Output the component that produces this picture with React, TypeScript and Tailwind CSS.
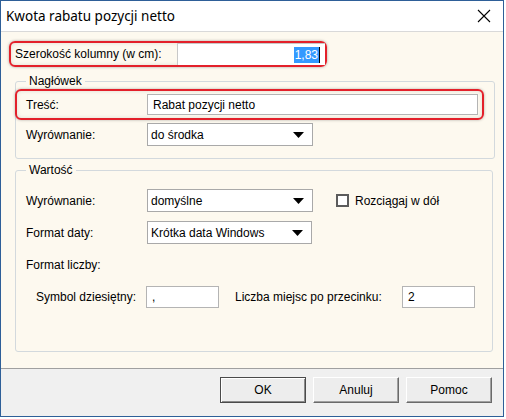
import React from "react";

function Arrow() {
  return (
    <svg width="11" height="6" viewBox="0 0 11 6" className="shrink-0">
      <path d="M0 0 H11 L5.5 6 Z" fill="#000" />
    </svg>
  );
}

function Select({ value, width }: { value: string; width: string }) {
  return (
    <div
      className={`${width} h-[23px] bg-white border border-[#a9a9a9] flex items-center justify-between pl-[3px] pr-[8px]`}
    >
      <span>{value}</span>
      <Arrow />
    </div>
  );
}

function Button({ label, primary }: { label: string; primary?: boolean }) {
  return (
    <button
      className={`w-[86px] h-[26px] bg-[#ededed] text-[12px] text-black ${
        primary
          ? "border border-[#4a4a4a] shadow-[inset_1px_1px_0_#ffffff,inset_-1px_-1px_0_#8a8a8a]"
          : "border border-t-[#ffffff] border-l-[#ffffff] border-b-[#6a6a6a] border-r-[#6a6a6a] shadow-[inset_-1px_-1px_0_#a0a0a0]"
      }`}
    >
      {label}
    </button>
  );
}

export default function App() {
  return (
    <div className="w-[504px] h-[417px] border border-[#2e5f98] bg-white flex flex-col font-['Liberation_Sans',Arial,sans-serif] text-[12px] text-black leading-[14px]">
      {/* Title bar */}
      <div className="h-[31px] shrink-0 flex items-center justify-between pl-[5px] pr-[12px] border-b border-[#d9d9d9]">
        <span className="font-['Noto_Sans',sans-serif] text-[13.5px]">Kwota rabatu pozycji netto</span>
        <svg width="14" height="14" viewBox="0 0 14 14">
          <path d="M1 1 L13 13 M13 1 L1 13" stroke="#000" strokeWidth="1.1" />
        </svg>
      </div>

      {/* Body */}
      <div className="flex-1 bg-[#fdf9ef] flex flex-col pt-[9px]">
        <div className="ml-[8px] w-[318px] h-[26px] border-2 border-[#e3202a] rounded-[6px] shadow-[0_0_3px_rgba(0,0,0,0.35),inset_0_0_4px_rgba(0,0,0,0.12)] flex items-center pl-[4px]">
          <span className="w-[162px]">Szerokość kolumny (w cm):</span>
          <div className="flex-1 h-[22px] bg-white border-l border-t border-[#c8c8c8] flex items-center justify-end pr-[5px]">
            <span className="bg-[#3399ff] text-white px-[1px] leading-[16px]">1,83</span>
            <span className="w-[1px] h-[16px] bg-black" />
          </div>
        </div>

        <fieldset className="mt-[7px] ml-[14px] w-[478px] border border-[#d3d9dd] rounded-[3px] px-[10px] pt-[1px] pb-[12px]">
          <legend className="px-[3px]">Nagłówek</legend>
          <div className="-ml-[11px] w-[469px] h-[31px] border-2 border-[#e3202a] rounded-[6px] shadow-[0_0_3px_rgba(0,0,0,0.3),inset_0_0_4px_rgba(0,0,0,0.12)] flex items-center pl-[9px]">
            <span className="w-[121px]">Treść:</span>
            <div className="w-[331px] h-[21px] bg-white border border-[#b4b4b4] flex items-center pl-[5px]">
              Rabat pozycji netto
            </div>
          </div>
          <div className="mt-[3px] flex items-center">
            <span className="w-[121px]">Wyrównanie:</span>
            <Select value="do środka" width="w-[166px]" />
          </div>
        </fieldset>

        <fieldset className="mt-[4px] ml-[14px] w-[478px] h-[189px] border border-[#d3d9dd] rounded-[3px] px-[10px] pt-[12px]">
          <legend className="px-[3px]">Wartość</legend>
          <div className="flex items-center">
            <span className="w-[121px]">Wyrównanie:</span>
            <Select value="domyślne" width="w-[166px]" />
            <div className="ml-[23px] flex items-center">
              <span className="w-[13px] h-[13px] bg-white border-2 border-[#5c5c5c]" />
              <span className="ml-[6px]">Rozciągaj w dół</span>
            </div>
          </div>
          <div className="mt-[9px] flex items-center">
            <span className="w-[121px]">Format daty:</span>
            <Select value="Krótka data Windows" width="w-[165px]" />
          </div>
          <div className="mt-[14px]">Format liczby:</div>
          <div className="mt-[14px] flex items-center pl-[10px]">
            <span className="w-[110px]">Symbol dziesiętny:</span>
            <div className="w-[73px] h-[22px] bg-white border border-[#b4b4b4] flex items-center pl-[5px]">,</div>
            <span className="ml-[16px] w-[167px]">Liczba miejsc po przecinku:</span>
            <div className="w-[73px] h-[22px] bg-white border border-[#b4b4b4] flex items-center pl-[5px]">2</div>
          </div>
        </fieldset>
      </div>

      {/* Footer */}
      <div className="h-[48px] shrink-0 bg-[#f0f0f0] border-t border-[#a0a0a0] flex justify-end items-start pt-[8px] pr-[11px] gap-[7px]">
        <Button label="OK" primary />
        <Button label="Anuluj" />
        <Button label="Pomoc" />
      </div>
    </div>
  );
}
